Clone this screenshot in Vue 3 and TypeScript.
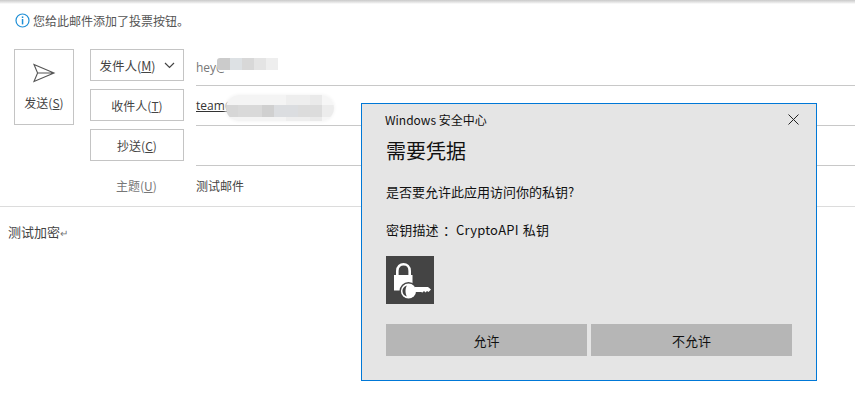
<script setup lang="ts">
const fields = [
  { label: '发件人', key: 'M', chevron: true },
  { label: '收件人', key: 'T', chevron: false },
  { label: '抄送', key: 'C', chevron: false },
]
</script>

<template>
  <div class="page">
    <div class="topbar"></div>
    <div class="notice">
      <svg class="info" width="15" height="15" viewBox="0 0 15 15">
        <circle cx="7.5" cy="7.5" r="6.5" fill="none" stroke="#1f8fd6" stroke-width="1.2" />
        <rect x="6.8" y="3.4" width="1.5" height="1.6" fill="#1f8fd6" />
        <rect x="6.8" y="6" width="1.5" height="5.4" fill="#1f8fd6" />
      </svg>
      <span>您给此邮件添加了投票按钮。</span>
    </div>
    <div class="compose">
      <button class="send">
        <svg width="24" height="20" viewBox="0 0 24 20">
          <path d="M2 1.5 L22 10 L2 18.5 L5.6 10 Z M5.6 10 H22" fill="none" stroke="#555" stroke-width="1.1" stroke-linejoin="miter" />
        </svg>
        <span>发送(<u>S</u>)</span>
      </button>
      <div class="fields">
        <div class="buttons">
          <button v-for="f in fields" :key="f.key" class="field" :class="{ chev: f.chevron }">
            <span>{{ f.label }}(<u>{{ f.key }}</u>)</span>
            <svg v-if="f.chevron" width="11" height="7" viewBox="0 0 11 7">
              <path d="M1 1 L5.5 5.5 L10 1" fill="none" stroke="#444" stroke-width="1.2" />
            </svg>
          </button>
        </div>
        <div class="values">
          <div class="value from">
            <span>hey@</span>
            <div class="mosaic small"></div>
          </div>
          <div class="value to">
            <span><u>team@</u></span>
            <div class="mosaic large"></div>
          </div>
          <div class="value cc"></div>
        </div>
      </div>
    </div>
    <div class="subject">
      <span class="subject-label">主题(<u>U</u>)</span>
      <span class="subject-value">测试邮件</span>
    </div>
    <div class="body-text">测试加密<span class="ret">↵</span></div>

    <div class="dialog">
      <div class="titlebar">
        <span>Windows 安全中心</span>
        <svg width="11" height="11" viewBox="0 0 11 11">
          <path d="M0.5 0.5 L10.5 10.5 M10.5 0.5 L0.5 10.5" stroke="#222" stroke-width="1" fill="none" />
        </svg>
      </div>
      <div class="heading">需要凭据</div>
      <div class="question">是否要允许此应用访问你的私钥?</div>
      <div class="desc">密钥描述 ：CryptoAPI 私钥</div>
      <div class="tile">
        <svg width="48" height="48" viewBox="0 0 48 48">
          <path d="M11.3 20 V15 C11.3 6 23.7 6 23.7 15 V20" fill="none" stroke="#fff" stroke-width="2.6" />
          <rect x="8" y="19" width="18.5" height="15.5" fill="#fff" />
          <circle cx="22.5" cy="35" r="9" fill="#444" />
          <path d="M29 31 H42 L45 33.5 L42.5 36 L41 35 L39.5 36.5 L38 35 L36.5 36.5 L35 36 H29 Z" fill="#fff" />
          <circle cx="22.5" cy="35" r="7.6" fill="#fff" />
          <path d="M21 29.5 C17.5 30.5 16.5 33 16.5 35 C16.5 37 17.5 39.5 21 40.5 C19 38 19 32 21 29.5 Z" fill="#444" />
        </svg>
      </div>
      <div class="actions">
        <button class="action">允许</button>
        <button class="action">不允许</button>
      </div>
    </div>
  </div>
</template>

<style>
html, body { margin: 0; background: #fff; }
</style>

<style scoped>
.page {
  position: relative;
  width: 855px;
  height: 408px;
  overflow: hidden;
  background: #fff;
  color: #444;
  font-family: "Noto Sans CJK SC", "Liberation Sans", sans-serif;
  font-size: 12px;
}
button { font-family: inherit; padding: 0; background: #fff; cursor: default; }
.topbar { height: 4px; background: linear-gradient(#c9c9c9, #ececec 70%, #fff); }
.notice {
  display: flex;
  align-items: center;
  gap: 3px;
  height: 15px;
  margin: 9px 0 21px 15px;
  color: #555;
}
.info { flex: none; }
.compose { display: flex; padding-left: 14px; }
.send {
  width: 60px;
  height: 76px;
  border: 1px solid #c4c4c4;
  display: flex;
  flex-direction: column;
  align-items: center;
  gap: 11px;
  padding-top: 13px;
  font-size: 12px;
  color: #444;
}
.fields { flex: 1; display: flex; margin-left: 16px; }
.buttons { display: flex; flex-direction: column; gap: 8px; width: 94px; }
.field {
  height: 32px;
  border: 1px solid #c4c4c4;
  font-size: 12px;
  color: #444;
  display: flex;
  align-items: center;
  justify-content: center;
  gap: 8px;
}
.field.chev { gap: 8px; padding-right: 0; font-size: 12.5px; }
.values { flex: 1; margin-left: 12px; }
.value { border-bottom: 1px solid #c8c8c8; display: flex; align-items: center; font-family: "Open Sans", sans-serif; font-size: 12px; position: relative; box-sizing: border-box; }
.value.from { height: 37px; color: #777; }
.value.to { height: 40px; color: #333; }
.value.cc { height: 40px; }
.mosaic { position: absolute; }
.mosaic.small {
  left: 21px; top: 9px; width: 61px; height: 12px;
  border-radius: 3px 0 0 3px;
  background: linear-gradient(90deg, #cbcbcb 0 13px, #dde1e4 13px 25px, #d8d8d8 25px 37px, #e4e4e4 37px 49px, #eeeeee 49px 61px);
}
.mosaic.large {
  left: 30px; top: 9px; width: 108px; height: 26px;
  border-radius: 13px;
  box-shadow: 0 0 3px 1px #f6f6f6;
  background:
    linear-gradient(90deg, #d6d6d6 0 12px, #d9d9d9 12px 36px, #d0d0d0 36px 48px, #dbdde0 48px 72px, #dcdcdc 72px 96px, #ececec 96px 108px) 0 10px / 100% 12px no-repeat,
    linear-gradient(90deg, #f4f4f4 0 60px, #eeeeee 60px 84px, #eaeaea 84px 96px, #f6f6f6 96px 108px);
}
.subject {
  display: flex;
  align-items: center;
  height: 41px;
  margin-top: -1px;
  border-bottom: 1px solid #dcdcdc;
  color: #555;
}
.subject-label { width: 196px; padding-left: 116px; box-sizing: border-box; color: #777; }
.subject-value { color: #444; }
.body-text { margin: 15px 0 0 8px; font-size: 13px; line-height: 20px; color: #444; }
.ret { color: #777; font-size: 10px; }
.dialog {
  position: absolute;
  left: 361px;
  top: 103px;
  width: 456px;
  height: 278px;
  box-sizing: border-box;
  border: 1px solid #0078d7;
  background: #e5e5e5;
  padding: 0 24px;
  color: #111;
}
.titlebar {
  display: flex;
  justify-content: space-between;
  align-items: center;
  height: 30px;
  font-size: 12px;
  margin-left: -1px;
}
.titlebar svg { margin-right: -7px; }
.heading { font-size: 20px; line-height: 28px; margin-top: 3px; }
.question { font-size: 13px; line-height: 20px; margin-top: 17px; }
.desc { font-size: 13px; line-height: 20px; margin-top: 18px; word-spacing: 1px; letter-spacing: 0.2px; }
.tile { width: 48px; height: 48px; background: #444; margin-top: 16px; }
.actions { display: flex; gap: 4px; margin-top: 20px; }
.action {
  width: 201px;
  height: 32px;
  border: none;
  background: #b6b6b6;
  color: #111;
  font-size: 13px;
}
</style>
